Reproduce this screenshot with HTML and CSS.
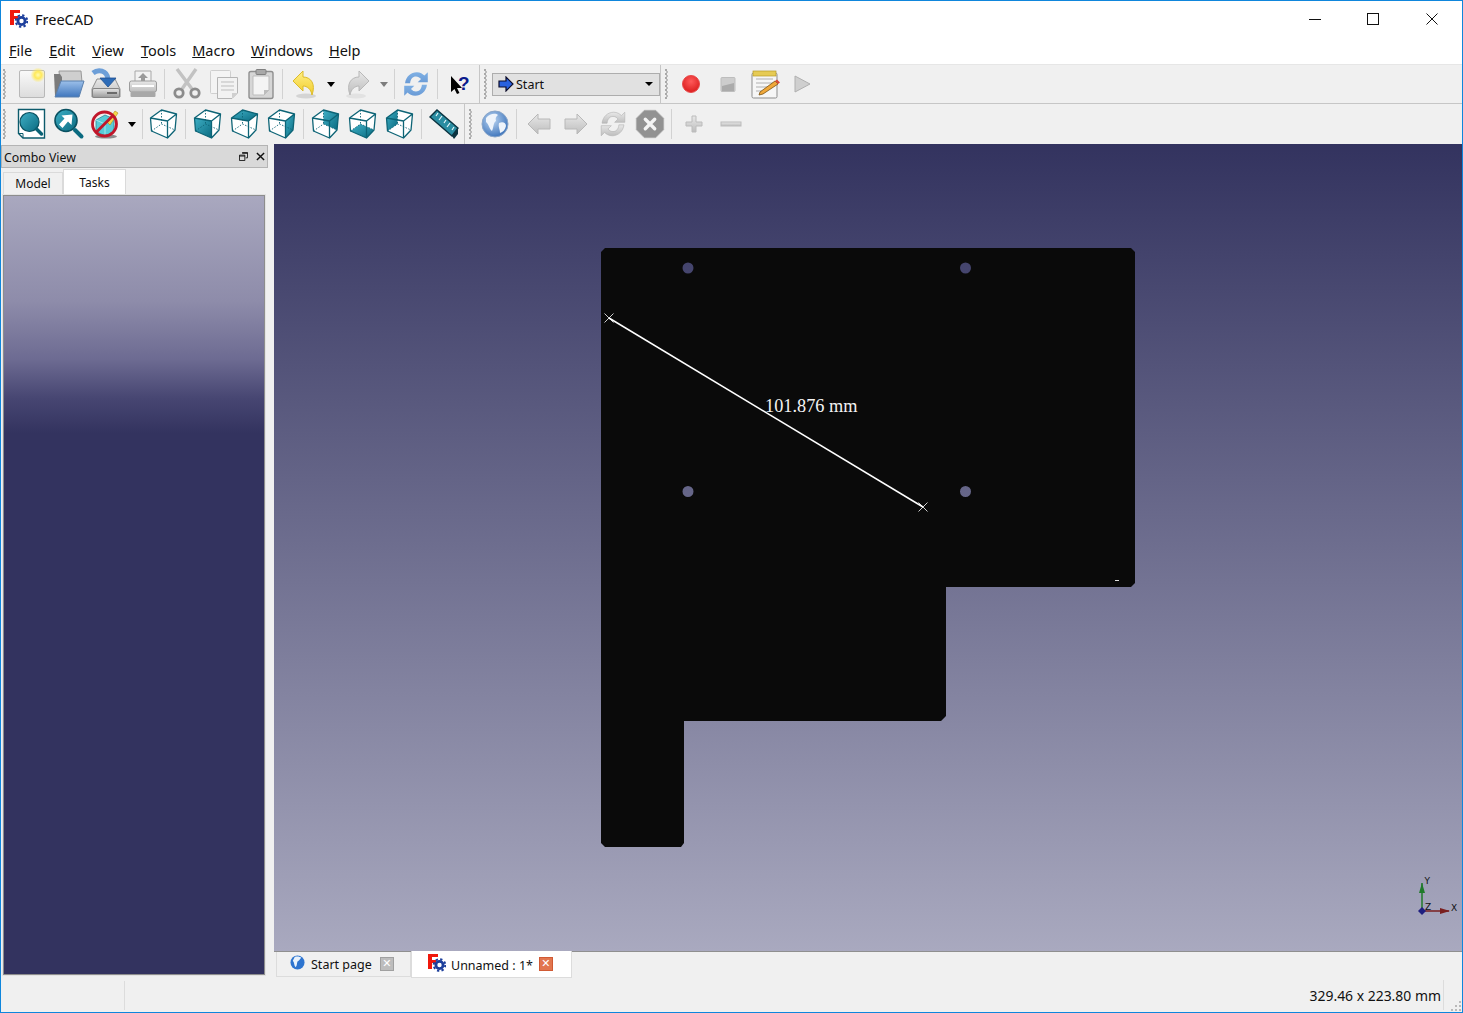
FILE: index.html
```html
<!DOCTYPE html>
<html lang="en">
<head>
<meta charset="utf-8">
<title>FreeCAD</title>
<link rel="stylesheet" href="styles.css">
</head>
<body>
<svg class="defs" width="0" height="0" aria-hidden="true">
  <defs>
    <linearGradient id="gPage" x1="0" y1="0" x2="0" y2="1"><stop offset="0" stop-color="#fafafa"/><stop offset="1" stop-color="#dcdcdc"/></linearGradient>
    <radialGradient id="gStar"><stop offset="0" stop-color="#fffbb0"/><stop offset=".45" stop-color="#ffe95a"/><stop offset="1" stop-color="#ffe95a" stop-opacity="0"/></radialGradient>
    <linearGradient id="gBlue" x1="0" y1="0" x2="0" y2="1"><stop offset="0" stop-color="#9cc0ea"/><stop offset="1" stop-color="#3f76bd"/></linearGradient>
    <linearGradient id="gSync" x1="0" y1="0" x2="0" y2="1"><stop offset="0" stop-color="#7fb0e4"/><stop offset="1" stop-color="#6a9bd6"/></linearGradient>
    <linearGradient id="gGrey" x1="0" y1="0" x2="0" y2="1"><stop offset="0" stop-color="#e4e4e4"/><stop offset="1" stop-color="#9a9a9a"/></linearGradient>
    <linearGradient id="gLight" x1="0" y1="0" x2="0" y2="1"><stop offset="0" stop-color="#e8e8e8"/><stop offset="1" stop-color="#bdbdbd"/></linearGradient>
    <linearGradient id="gYellow" x1="0" y1="0" x2="0" y2="1"><stop offset="0" stop-color="#fff089"/><stop offset="1" stop-color="#f2cc2a"/></linearGradient>
    <linearGradient id="gTeal" x1="0" y1="0" x2="1" y2="1"><stop offset="0" stop-color="#3fb0c6"/><stop offset="1" stop-color="#0a6a80"/></linearGradient>
    <radialGradient id="gRec" cx=".5" cy=".35" r=".7"><stop offset="0" stop-color="#ff5a5a"/><stop offset="1" stop-color="#d81818"/></radialGradient>
    <radialGradient id="gGlobe" cx=".4" cy=".35" r=".75"><stop offset="0" stop-color="#bcd6f2"/><stop offset="1" stop-color="#2f69b5"/></radialGradient>
    <linearGradient id="gCanvas" x1="0" y1="0" x2="0" y2="1"><stop offset="0" stop-color="#33335f"/><stop offset="1" stop-color="#a9a9bf"/></linearGradient>

    <symbol id="logo" viewBox="0 0 18 18">
      <path d="M0 0H10V3H4V6H8V9H4V15H0Z" fill="#f0180c"/>
      <circle cx="11.500" cy="11" r="3.600" fill="none" stroke="#1d3f9c" stroke-width="2.800"/>
      <circle cx="11.500" cy="11" r="5.800" fill="none" stroke="#1d3f9c" stroke-width="2" stroke-dasharray="2.300 2.250"/>
    </symbol>

    <symbol id="i-new" viewBox="0 0 32 32">
      <rect x="3.500" y="2.500" width="25" height="27" rx="1.500" fill="url(#gPage)" stroke="#b8b8b8"/>
      <circle cx="22" cy="7" r="7.500" fill="url(#gStar)"/>
    </symbol>
    <symbol id="i-open" viewBox="0 0 32 32">
      <path d="M6 3H28L29 14H7Z" fill="#cfcfcf" stroke="#9a9a9a"/>
      <path d="M1 6H7L9 9V16L4 28H2Z" fill="#7b7b7b"/>
      <path d="M8 13H31L26 29H2Z" fill="url(#gBlue)" stroke="#5b80ad"/>
    </symbol>
    <symbol id="i-save" viewBox="0 0 32 32">
      <path d="M7 11H25L30 21V29H2V21Z" fill="url(#gLight)" stroke="#8f8f8f"/>
      <rect x="2.500" y="20.500" width="27" height="9" rx="1.500" fill="url(#gGrey)" stroke="#858585"/>
      <rect x="17" y="24" width="10" height="2" fill="#6a6a6a"/>
      <path d="M3 5C8 1 17 2 18 11" fill="none" stroke="#6d9fd8" stroke-width="5"/>
      <path d="M10 10H26L18 19Z" fill="#2d6cb8" stroke="#1e4f8f" stroke-width=".8"/>
    </symbol>
    <symbol id="i-print" viewBox="0 0 32 32">
      <path d="M8 3H24V14H8Z" fill="#f2f2f2" stroke="#a8a8a8"/>
      <path d="M16 5L21 10H18V13H14V10H11Z" fill="#9a9a9a"/>
      <rect x="2.500" y="13" width="27" height="11" rx="2" fill="url(#gLight)" stroke="#9c9c9c"/>
      <rect x="5" y="17" width="22" height="2" fill="#fff"/>
      <rect x="3.500" y="24" width="25" height="5" rx="1" fill="#a8a8a8"/>
    </symbol>
    <symbol id="i-cut" viewBox="0 0 32 32">
      <path d="M6 1L21 21M25 1L11 21" stroke="#c2c2c2" stroke-width="3.400" fill="none"/>
      <circle cx="8" cy="25" r="4.200" fill="none" stroke="#8c8c8c" stroke-width="2.800"/>
      <circle cx="24" cy="25" r="4.200" fill="none" stroke="#8c8c8c" stroke-width="2.800"/>
    </symbol>
    <symbol id="i-copy" viewBox="0 0 32 32">
      <rect x="2.500" y="2.500" width="20" height="23" rx="1" fill="#f4f4f4" stroke="#cfcfcf"/>
      <path d="M9.500 9.500H29.500V25L24 30.500H9.500Z" fill="#f2f2f2" stroke="#b5b5b5"/>
      <path d="M13 14H26M13 18H26M13 22H26" stroke="#bdbdbd"/>
      <path d="M24 30V25H29.500Z" fill="#cfcfcf"/>
    </symbol>
    <symbol id="i-paste" viewBox="0 0 32 32">
      <rect x="4" y="3.500" width="24" height="27" rx="2" fill="#d6d6d6" stroke="#8f8f8f" stroke-width="1.400"/>
      <path d="M8 8H24V22L19 27H8Z" fill="#f4f4f4" stroke="#bdbdbd"/>
      <path d="M19 27V22H24Z" fill="#bdbdbd"/>
      <rect x="11" y="1.500" width="10" height="5" rx="1" fill="#a8a8a8" stroke="#808080"/>
    </symbol>
    <symbol id="i-undo" viewBox="0 0 32 32">
      <ellipse cx="18" cy="28" rx="10" ry="2.500" fill="#d4d4d4"/>
      <path d="M5 13L15 3V9C23 9 28 16 24 27C23 21 19 18 15 18V23Z" fill="url(#gYellow)" stroke="#dcbb2a"/>
    </symbol>
    <symbol id="i-redo" viewBox="0 0 32 32">
      <ellipse cx="14" cy="28" rx="10" ry="2.500" fill="#e2e2e2"/>
      <path d="M27 13L17 3V9C9 9 4 16 8 27C9 21 13 18 17 18V23Z" fill="url(#gLight)" stroke="#b8b8b8"/>
    </symbol>
    <symbol id="i-sync" viewBox="-3 -3 38 38">
      <path d="M3 15C4 7 10 2 17 2C21 2 24 4 26 6L30 2V14H18L22 10C20 8 18.500 7 16 7C12 7 9.500 10 9 15Z"/>
      <path d="M29 17C28 25 22 30 15 30C11 30 8 28 6 26L2 30V18H14L10 22C12 24 13.500 25 16 25C20 25 22.500 22 23 17Z"/>
    </symbol>
    <symbol id="i-help" viewBox="0 0 32 32">
      <path d="M8 8V24L11.500 21L14 26L16.500 25L14 20H19Z" fill="#000"/>
      <text x="15" y="22" class="help-q">?</text>
    </symbol>
    <symbol id="i-start" viewBox="0 0 16 16">
      <path d="M1 5H8V1L15 8L8 15V11H1Z" fill="#2a62e0" stroke="#0c0c2a" stroke-width="1.200"/>
    </symbol>
    <symbol id="i-rec" viewBox="0 0 32 32">
      <circle cx="16" cy="16" r="8.500" fill="url(#gRec)" stroke="#e84a4a"/>
    </symbol>
    <symbol id="i-stop" viewBox="0 0 32 32">
      <rect x="9" y="9.500" width="14" height="14" rx="1" fill="#cdcdcd" stroke="#bdbdbd"/>
      <path d="M10 23V18L22 15V23Z" fill="#ababab"/>
    </symbol>
    <symbol id="i-macro" viewBox="0 0 32 32">
      <rect x="3" y="5" width="25" height="25" rx="1.500" fill="#f6f6f6" stroke="#8d8d8d"/>
      <rect x="4" y="3" width="23" height="5" fill="#e6cb54" stroke="#b89b28" stroke-width=".7"/>
      <path d="M7 11H24M7 15H24M7 19H18M7 23H13" stroke="#b0b0b0"/>
      <path d="M11 24L26 13L29 16L14 26L10 27Z" fill="#f0a83a" stroke="#7a5212" stroke-width=".8"/>
      <path d="M26 13L28 11.500L31 14.500L29 16Z" fill="#d84a3a"/>
    </symbol>
    <symbol id="i-play" viewBox="0 0 32 32">
      <path d="M9 8L24 16L9 24Z" fill="#cfcfcf" stroke="#b0b0b0"/>
    </symbol>

    <symbol id="i-fit" viewBox="0 0 32 32">
      <path d="M2.500 1.500H28.500V30H7L2.500 25.500Z" fill="#fff" stroke="#0c5b6c" stroke-width="1.400"/>
      <path d="M2.500 25.500H7V30" fill="none" stroke="#0c5b6c"/>
      <circle cx="13.500" cy="14" r="9.500" fill="url(#gTeal)" stroke="#0a5161" stroke-width="1.200"/>
      <path d="M20.500 21L25.500 26" stroke="#0a6275" stroke-width="3.500" stroke-linecap="round"/>
    </symbol>
    <symbol id="i-fitsel" viewBox="0 0 32 32">
      <circle cx="13" cy="12.500" r="11" fill="url(#gTeal)" stroke="#0a5161" stroke-width="1.600"/>
      <path d="M19.500 6.500L18.500 17L15 13.500L9.500 20L6 16.500L11.500 10.500L8.500 7.500Z" fill="#fff"/>
      <path d="M22 22L28.500 28.500" stroke="#0a6a80" stroke-width="4" stroke-linecap="round"/>
    </symbol>
    <symbol id="i-style" viewBox="0 0 32 32">
      <ellipse cx="16" cy="28.500" rx="11" ry="2" fill="#8c8c8c"/>
      <path d="M6 12L15 7L24 11V23L15 28L6 23Z" fill="#59cbd8" stroke="#2a8a98" stroke-width=".8"/>
      <path d="M6 12L15 16L24 11M15 16V28" stroke="#a4e8ef" fill="none"/>
      <path d="M17 14L25 3L28 5L20 17Z" fill="#f4d84a" stroke="#b08a18" stroke-width=".6"/>
      <circle cx="14.500" cy="16" r="12" fill="none" stroke="#c0162a" stroke-width="2.800"/>
      <path d="M6 24.500L23 7.500" stroke="#c0162a" stroke-width="2.800"/>
    </symbol>

    <g id="cube-lines">
      <path d="M12 2L27 6L25.500 22L18 30L2 23L1 10ZM1 10L18 13L27 6M18 13V30" fill="none" stroke="#0d6476" stroke-width="1.300" stroke-linejoin="round"/>
      <path d="M12 2V16M2 23L12 16L25.500 22" fill="none" stroke="#0d6476" stroke-width=".9" stroke-dasharray="1.500 1.500"/>
    </g>
    <path id="cube-body" d="M12 2L27 6L25.500 22L18 30L2 23L1 10Z" fill="#fff"/>
    <symbol id="c-iso" viewBox="0 0 29 32"><use href="#cube-body"/><use href="#cube-lines"/></symbol>
    <symbol id="c-front" viewBox="0 0 29 32"><use href="#cube-body"/><path d="M1 10L18 13V30L2 23Z" fill="url(#gTeal)"/><use href="#cube-lines"/></symbol>
    <symbol id="c-top" viewBox="0 0 29 32"><use href="#cube-body"/><path d="M12 2L27 6L18 13L1 10Z" fill="url(#gTeal)"/><use href="#cube-lines"/></symbol>
    <symbol id="c-right" viewBox="0 0 29 32"><use href="#cube-body"/><path d="M18 13L27 6L25.500 22L18 30Z" fill="url(#gTeal)"/><use href="#cube-lines"/></symbol>
    <symbol id="c-rear" viewBox="0 0 29 32"><use href="#cube-body"/><path d="M12 2L27 6L25.500 22L12 16Z" fill="url(#gTeal)"/><use href="#cube-lines"/></symbol>
    <symbol id="c-bottom" viewBox="0 0 29 32"><use href="#cube-body"/><path d="M2 23L12 16L25.500 22L18 30Z" fill="url(#gTeal)"/><use href="#cube-lines"/></symbol>
    <symbol id="c-left" viewBox="0 0 29 32"><use href="#cube-body"/><path d="M1 10L12 2V16L2 23Z" fill="url(#gTeal)"/><use href="#cube-lines"/></symbol>

    <symbol id="i-measure" viewBox="0 0 32 32">
      <path d="M2 9L9 2L30 20L24 28Z" fill="#2a8da2" stroke="#0b3340" stroke-width="1.400"/>
      <path d="M10 5L8 8M14 8L11 12M18 12L16 15M22 15L19 19M26 19L24 22" stroke="#e8f8fb" stroke-width="1.200"/>
      <path d="M24 28L30 20L30 26L26 31Z" fill="#0b3340"/>
    </symbol>
    <symbol id="i-globe" viewBox="0 0 32 32">
      <circle cx="16" cy="16" r="13" fill="url(#gGlobe)" stroke="#8aa6c9"/>
      <path d="M7 10C11 5 17 5 19 7C17 9 16 10 17 13C14 15 15 19 13 23C10 21 10 16 7 14Z" fill="#eef4fb"/>
      <path d="M20 15C24 13 27 15 27 18C26 22 24 24 21 25C21 21 19 19 20 15Z" fill="#eef4fb"/>
    </symbol>
    <symbol id="i-back" viewBox="0 0 32 32">
      <path d="M5 16L15 6V11H27V21H15V26Z" fill="url(#gLight)" stroke="#b8b8b8"/>
    </symbol>
    <symbol id="i-fwd" viewBox="0 0 32 32">
      <path d="M27 16L17 6V11H5V21H17V26Z" fill="url(#gLight)" stroke="#b8b8b8"/>
    </symbol>
    <symbol id="i-halt" viewBox="-1 -1 34 34">
      <path d="M10 1.500H22L30.500 10V22L22 30.500H10L1.500 22V10Z" fill="#929292" stroke="#adadad"/>
      <path d="M11 11L21 21M21 11L11 21" stroke="#f4f4f4" stroke-width="3.600" stroke-linecap="round"/>
    </symbol>
    <symbol id="i-plus" viewBox="0 0 32 32">
      <path d="M14 8H18V14H24V18H18V24H14V18H8V14H14Z" fill="url(#gLight)" stroke="#bcbcbc"/>
    </symbol>
    <symbol id="i-minus" viewBox="0 0 32 32">
      <rect x="6" y="14" width="20" height="4" fill="url(#gLight)" stroke="#bcbcbc"/>
    </symbol>
    <symbol id="i-tabglobe" viewBox="0 0 16 16">
      <circle cx="8" cy="8" r="7.500" fill="#2d74cf"/>
      <path d="M5 2C8 1 11 2 12 3C10 5 10 6 8 7C7 9 8 11 6 13C4 11 5 8 3 6Z" fill="#e8f2fc"/>
    </symbol>
  </defs>
</svg>

<div class="window">
  <header class="titlebar">
    <svg class="logo"><use href="#logo"/></svg>
    <span class="title">FreeCAD</span>
    <div class="controls">
      <button class="ctl"><svg viewBox="0 0 12 12"><path d="M0 6.500H12" stroke="#111" fill="none"/></svg></button>
      <button class="ctl"><svg viewBox="0 0 12 12"><rect x=".5" y=".5" width="11" height="11" stroke="#111" fill="none"/></svg></button>
      <button class="ctl"><svg viewBox="0 0 12 12"><path d="M.5 .5L11.500 11.500M11.500 .5L.5 11.500" stroke="#111" fill="none"/></svg></button>
    </div>
  </header>

  <nav class="menubar">
    <span class="menu"><u>F</u>ile</span>
    <span class="menu"><u>E</u>dit</span>
    <span class="menu"><u>V</u>iew</span>
    <span class="menu"><u>T</u>ools</span>
    <span class="menu"><u>M</u>acro</span>
    <span class="menu"><u>W</u>indows</span>
    <span class="menu"><u>H</u>elp</span>
  </nav>

  <div class="toolrow toolrow-a">
    <div class="handle handle-first"></div>
    <span class="tb"><svg class="ic"><use href="#i-new"/></svg></span>
    <span class="tb"><svg class="ic"><use href="#i-open"/></svg></span>
    <span class="tb"><svg class="ic"><use href="#i-save"/></svg></span>
    <span class="tb"><svg class="ic"><use href="#i-print"/></svg></span>
    <span class="sep"></span>
    <span class="tb"><svg class="ic"><use href="#i-cut"/></svg></span>
    <span class="tb"><svg class="ic"><use href="#i-copy"/></svg></span>
    <span class="tb"><svg class="ic"><use href="#i-paste"/></svg></span>
    <span class="sep sep-tight"></span>
    <span class="tb"><svg class="ic"><use href="#i-undo"/></svg></span>
    <span class="drop"></span>
    <span class="tb"><svg class="ic"><use href="#i-redo"/></svg></span>
    <span class="drop drop-off"></span>
    <span class="sep sep-tight"></span>
    <span class="tb"><svg class="ic" fill="url(#gSync)"><use href="#i-sync"/></svg></span>
    <span class="sep sep-tight"></span>
    <span class="tb"><svg class="ic"><use href="#i-help"/></svg></span>
    <span class="bar-end"></span>
    <div class="handle"></div>
    <div class="combo">
      <svg class="combo-ic"><use href="#i-start"/></svg>
      <span class="combo-text">Start</span>
      <span class="combo-arrow"></span>
    </div>
    <span class="bar-end bar-end-b"></span>
    <div class="handle handle-narrow"></div>
    <span class="tb"><svg class="ic"><use href="#i-rec"/></svg></span>
    <span class="tb"><svg class="ic"><use href="#i-stop"/></svg></span>
    <span class="tb"><svg class="ic"><use href="#i-macro"/></svg></span>
    <span class="tb"><svg class="ic"><use href="#i-play"/></svg></span>
  </div>

  <div class="toolrow toolrow-b">
    <div class="handle handle-first"></div>
    <span class="tb"><svg class="ic"><use href="#i-fit"/></svg></span>
    <span class="tb"><svg class="ic"><use href="#i-fitsel"/></svg></span>
    <span class="tb"><svg class="ic"><use href="#i-style"/></svg></span>
    <span class="drop drop-narrow"></span>
    <span class="sep sep-tight"></span>
    <span class="tb"><svg class="ic"><use href="#c-iso"/></svg></span>
    <span class="sep"></span>
    <span class="tb"><svg class="ic"><use href="#c-front"/></svg></span>
    <span class="tb"><svg class="ic"><use href="#c-top"/></svg></span>
    <span class="tb"><svg class="ic"><use href="#c-right"/></svg></span>
    <span class="sep"></span>
    <span class="tb"><svg class="ic"><use href="#c-rear"/></svg></span>
    <span class="tb"><svg class="ic"><use href="#c-bottom"/></svg></span>
    <span class="tb"><svg class="ic"><use href="#c-left"/></svg></span>
    <span class="sep"></span>
    <span class="tb"><svg class="ic"><use href="#i-measure"/></svg></span>
    <span class="bar-end bar-end-c"></span>
    <div class="handle handle-narrow"></div>
    <span class="tb"><svg class="ic"><use href="#i-globe"/></svg></span>
    <span class="sep"></span>
    <span class="tb"><svg class="ic"><use href="#i-back"/></svg></span>
    <span class="tb"><svg class="ic"><use href="#i-fwd"/></svg></span>
    <span class="tb"><svg class="ic" fill="url(#gLight)" stroke="#b0b0b0" stroke-width=".7"><use href="#i-sync"/></svg></span>
    <span class="tb"><svg class="ic"><use href="#i-halt"/></svg></span>
    <span class="sep"></span>
    <span class="tb"><svg class="ic"><use href="#i-plus"/></svg></span>
    <span class="tb"><svg class="ic"><use href="#i-minus"/></svg></span>
  </div>

  <main class="workspace">
    <aside class="dock">
      <div class="dock-head">
        <span class="dock-title">Combo View</span>
        <svg class="dock-btn" viewBox="0 0 10 10"><path d="M3.500 .5H9.500V6.500H7.500M.5 3.500H6.500V9.500H.5Z" fill="none" stroke="#111"/><path d="M3.500 1.500H9.500M.5 4.500H6.500" stroke="#111"/></svg>
        <svg class="dock-btn" viewBox="0 0 10 10"><path d="M1 1L9 9M9 1L1 9" stroke="#111" stroke-width="1.600"/></svg>
      </div>
      <div class="dock-tabs">
        <span class="dtab">Model</span>
        <span class="dtab dtab-on">Tasks</span>
      </div>
      <div class="dock-pane"><div class="dock-grad"></div></div>
    </aside>

    <section class="center">
      <div class="viewport">
        <svg class="scene" viewBox="274 144 1188 807" preserveAspectRatio="none">
          <rect x="274" y="144" width="1188" height="807" fill="url(#gCanvas)"/>
          <path class="part" fill-rule="evenodd" d="M601 252L605 248H1131L1135 252V583L1131 587H946V716L941 721H684V843L681 847H605L601 843Z
            M682.500 268a5.500 5.500 0 1 0 11 0a5.500 5.500 0 1 0 -11 0Z
            M960 268a5.500 5.500 0 1 0 11 0a5.500 5.500 0 1 0 -11 0Z
            M682.500 491.500a5.500 5.500 0 1 0 11 0a5.500 5.500 0 1 0 -11 0Z
            M960 491.500a5.500 5.500 0 1 0 11 0a5.500 5.500 0 1 0 -11 0Z"/>
          <path d="M609 318L923 507" stroke="#fff" stroke-width="1.500" fill="none"/>
          <path d="M604.500 313.500L613.500 322.500M613.500 313.500L604.500 322.500M918.500 502.500L927.500 511.500M927.500 502.500L918.500 511.500" stroke="#fff" stroke-width=".8" fill="none"/>
          <text x="765" y="412" class="dim">101.876 mm</text>
          <rect x="1115" y="580" width="4" height="1" fill="#ddd"/>
          <path d="M1422 911V883" stroke="#1f7a2a" stroke-width="1.500"/>
          <path d="M1422 883L1425 893H1419Z" fill="#1f7a2a"/>
          <path d="M1422 911H1449" stroke="#7a1f1f" stroke-width="1.500"/>
          <path d="M1450 911L1440 908V914Z" fill="#7a1f1f"/>
          <path d="M1422 907L1426 911L1422 915L1418 911Z" fill="#1f1f80"/>
          <text x="1424.500" y="884" class="axis">Y</text>
          <text x="1451" y="911" class="axis">X</text>
          <text x="1425" y="910" class="axis">Z</text>
        </svg>
      </div>
      <div class="doc-tabs">
        <div class="doc-tab">
          <svg class="tab-ic"><use href="#i-tabglobe"/></svg>
          <span>Start page</span>
          <span class="tab-x">✕</span>
        </div>
        <div class="doc-tab doc-tab-on">
          <svg class="tab-logo"><use href="#logo"/></svg>
          <span class="tab-name">Unnamed : 1*</span>
          <span class="tab-x tab-x-on">✕</span>
        </div>
      </div>
    </section>
  </main>

  <footer class="statusbar">
    <span class="st-msg"></span>
    <span class="st-size">329.46 x 223.80 mm</span>
    <svg class="grip" viewBox="0 0 12 12"><path d="M9 1h2v2H9zM5 5h2v2H5zM9 5h2v2H9zM1 9h2v2H1zM5 9h2v2H5zM9 9h2v2H9z" fill="#b9b9b9"/></svg>
  </footer>
</div>
</body>
</html>
```

FILE: styles.css
```css
* { box-sizing: border-box; }
html, body { margin: 0; padding: 0; }
body { width: 1463px; height: 1013px; overflow: hidden; background: #f0f0f0; font-family: "Noto Sans", "Open Sans", sans-serif; color: #111; }
.defs { display: block; height: 0; width: 0; }
.window { width: 1463px; height: 1013px; border: 1px solid #0f86dc; display: flex; flex-direction: column; background: #f0f0f0; }

.titlebar { height: 36px; background: #fff; display: flex; align-items: center; flex: none; }
.logo { width: 18px; height: 18px; margin-left: 9px; }
.title { margin-left: 7px; font-size: 14.500px; }
.controls { margin-left: auto; display: flex; height: 36px; padding-right: 1px; }
.ctl { width: 58px; height: 36px; border: 0; background: none; padding: 0; display: flex; align-items: center; justify-content: center; }
.ctl:first-child { width: 56px; }
.ctl:nth-child(2) { width: 60px; }
.ctl svg { width: 12px; height: 12px; display: block; }

.menubar { height: 28px; background: #fff; display: flex; flex: none; align-items: center; padding-bottom: 2px; border-bottom: 1px solid #e6e6e6; }
.menu { font-size: 14.500px; padding: 0 8px; white-space: nowrap; }
.menu:nth-child(-n+3) { padding-right: 9px; }

.toolrow { display: flex; align-items: center; flex: none; background: #f0f0f0; border-bottom: 1px solid #c6c6c6; }
.toolrow-a { height: 39px; }
.toolrow-b { height: 40px; border-bottom: 0; }
.handle { width: 10px; height: 30px; flex: none; margin-left: 2px;
  background:
    radial-gradient(circle at 1px 1px, #a9a9a9 0, #a9a9a9 1px, transparent 1.200px) 2px 0 / 2px 4px repeat-y,
    radial-gradient(circle at 1px 1px, #bdbdbd 0, #bdbdbd 1px, transparent 1.200px) 3px 2px / 2px 4px repeat-y; }
.handle-first { background-position: 0 0, 1px 2px; }
.handle-narrow { width: 9px; }
.tb { width: 37px; height: 36px; flex: none; display: flex; align-items: center; justify-content: center; }
.ic { width: 32px; height: 32px; display: block; }
.sep { width: 7px; height: 30px; flex: none; display: flex; justify-content: center; }
.sep::before { content: ""; width: 1px; height: 30px; background: #d2d2d2; }
.sep-tight { width: 6px; }
.drop { width: 17px; flex: none; height: 30px; display: flex; align-items: center; justify-content: center; }
.drop::before { content: ""; border-left: 4.500px solid transparent; border-right: 4.500px solid transparent; border-top: 5px solid #000; }
.drop-off { width: 15px; }
.drop-off::before { border-top-color: #7d7d7d; }
.drop-narrow { width: 15px; }
.bar-end { width: 3px; height: 38px; flex: none; border-right: 1px solid #c6c6c6; }
.bar-end-b { width: 1px; }
.bar-end-c { height: 40px; }

.combo { width: 168px; height: 23px; flex: none; background: #e1e1e1; border: 1px solid #adadad; display: flex; align-items: center; padding: 0 6px 0 5px; }
.combo-ic { width: 16px; height: 16px; flex: none; }
.combo-text { font-size: 12.500px; margin-left: 2px; }
.combo-arrow { margin-left: auto; border-left: 4px solid transparent; border-right: 4px solid transparent; border-top: 4px solid #000; }

.workspace { flex: 1; display: flex; min-height: 0; }
.dock { width: 273px; flex: none; display: flex; flex-direction: column; padding: 1px 6px 0 0; }
.dock-head { height: 23px; background: #d9d9d9; border: 1px solid #b4b4b4; display: flex; align-items: center; padding: 1px 2px 0 2px; flex: none; }
.dock-title { font-size: 12.300px; margin-right: auto; }
.dock-btn { width: 9px; height: 9px; margin-left: 8px; margin-top: -2px; }
.dock-tabs { display: flex; height: 26px; padding: 2px 0 0 2px; align-items: flex-end; flex: none; }
.dtab { width: 60px; height: 22px; font-size: 12px; background: #f0f0f0; border: 1px solid #dadada; border-bottom: 0; display: flex; align-items: center; justify-content: center; }
.dtab-on { width: 63px; height: 25px; background: #fff; }
.dock-pane { flex: 1; margin: 0 2px 2px 1px; border: 1px solid #e3e3e3; min-height: 0; display: flex; }
.dock-grad { flex: 1; border: 1px solid #8d8d8d; background: linear-gradient(#a9a8bf 0, #8e8caa 13.500%, #6d6b92 21%, #474672 26%, #33335f 30.500%); }

.center { flex: 1; display: flex; flex-direction: column; min-width: 0; }
.viewport { height: 807px; flex: none; }
.scene { display: block; width: 100%; height: 100%; }
.part { fill: #0a0a0a; }
.dim { font-family: "Liberation Serif", serif; font-size: 18.300px; fill: #f4f4f4; }
.axis { font-family: "DejaVu Sans", sans-serif; font-size: 9px; fill: #111; }
.help-q { font-family: "Liberation Sans", sans-serif; font-weight: 700; font-size: 19px; fill: #0b1a8c; }

.doc-tabs { height: 27px; flex: none; display: flex; align-items: flex-start; padding-left: 2px; background: #f0f0f0; border-top: 1px solid #8f8f8f; }
.doc-tab { height: 25px; width: 135px; display: flex; align-items: center; font-size: 12.500px; padding-left: 13px; border: 1px solid #dcdcdc; border-top: 0; }
.doc-tab-on { width: 161px; height: 27px; margin-top: -1px; background: #fff; padding-left: 16px; }
.tab-name { margin-top: 2px; }
.tab-ic { width: 15px; height: 15px; margin-right: 6px; margin-top: -3px; }
.tab-logo { width: 18px; height: 18px; margin-right: 5px; margin-top: -3px; }
.tab-x { width: 14px; height: 14px; margin-left: 8px; background: #bdbdbd; border: 1px solid #a0a0a0; color: #fff; font-size: 11px; line-height: 12px; text-align: center; font-weight: 700; font-family: "DejaVu Sans", sans-serif; }
.tab-x-on { background: #e2764f; border-color: #d05a34; margin-left: 6px; }

.statusbar { height: 34px; flex: none; display: flex; align-items: stretch; position: relative; background: #f0f0f0; }
.st-msg { width: 124px; border-right: 1px solid #dcdcdc; margin: 3px 0 2px; flex: none; }
.st-size { margin-left: auto; font-size: 13.950px; align-self: flex-end; margin-bottom: 7px; }
.grip { width: 12px; height: 12px; align-self: flex-end; margin-left: 9px; }
.statusbar::after { content: ""; position: absolute; right: 18px; top: 2px; bottom: 2px; width: 1px; background: #dcdcdc; }
```
